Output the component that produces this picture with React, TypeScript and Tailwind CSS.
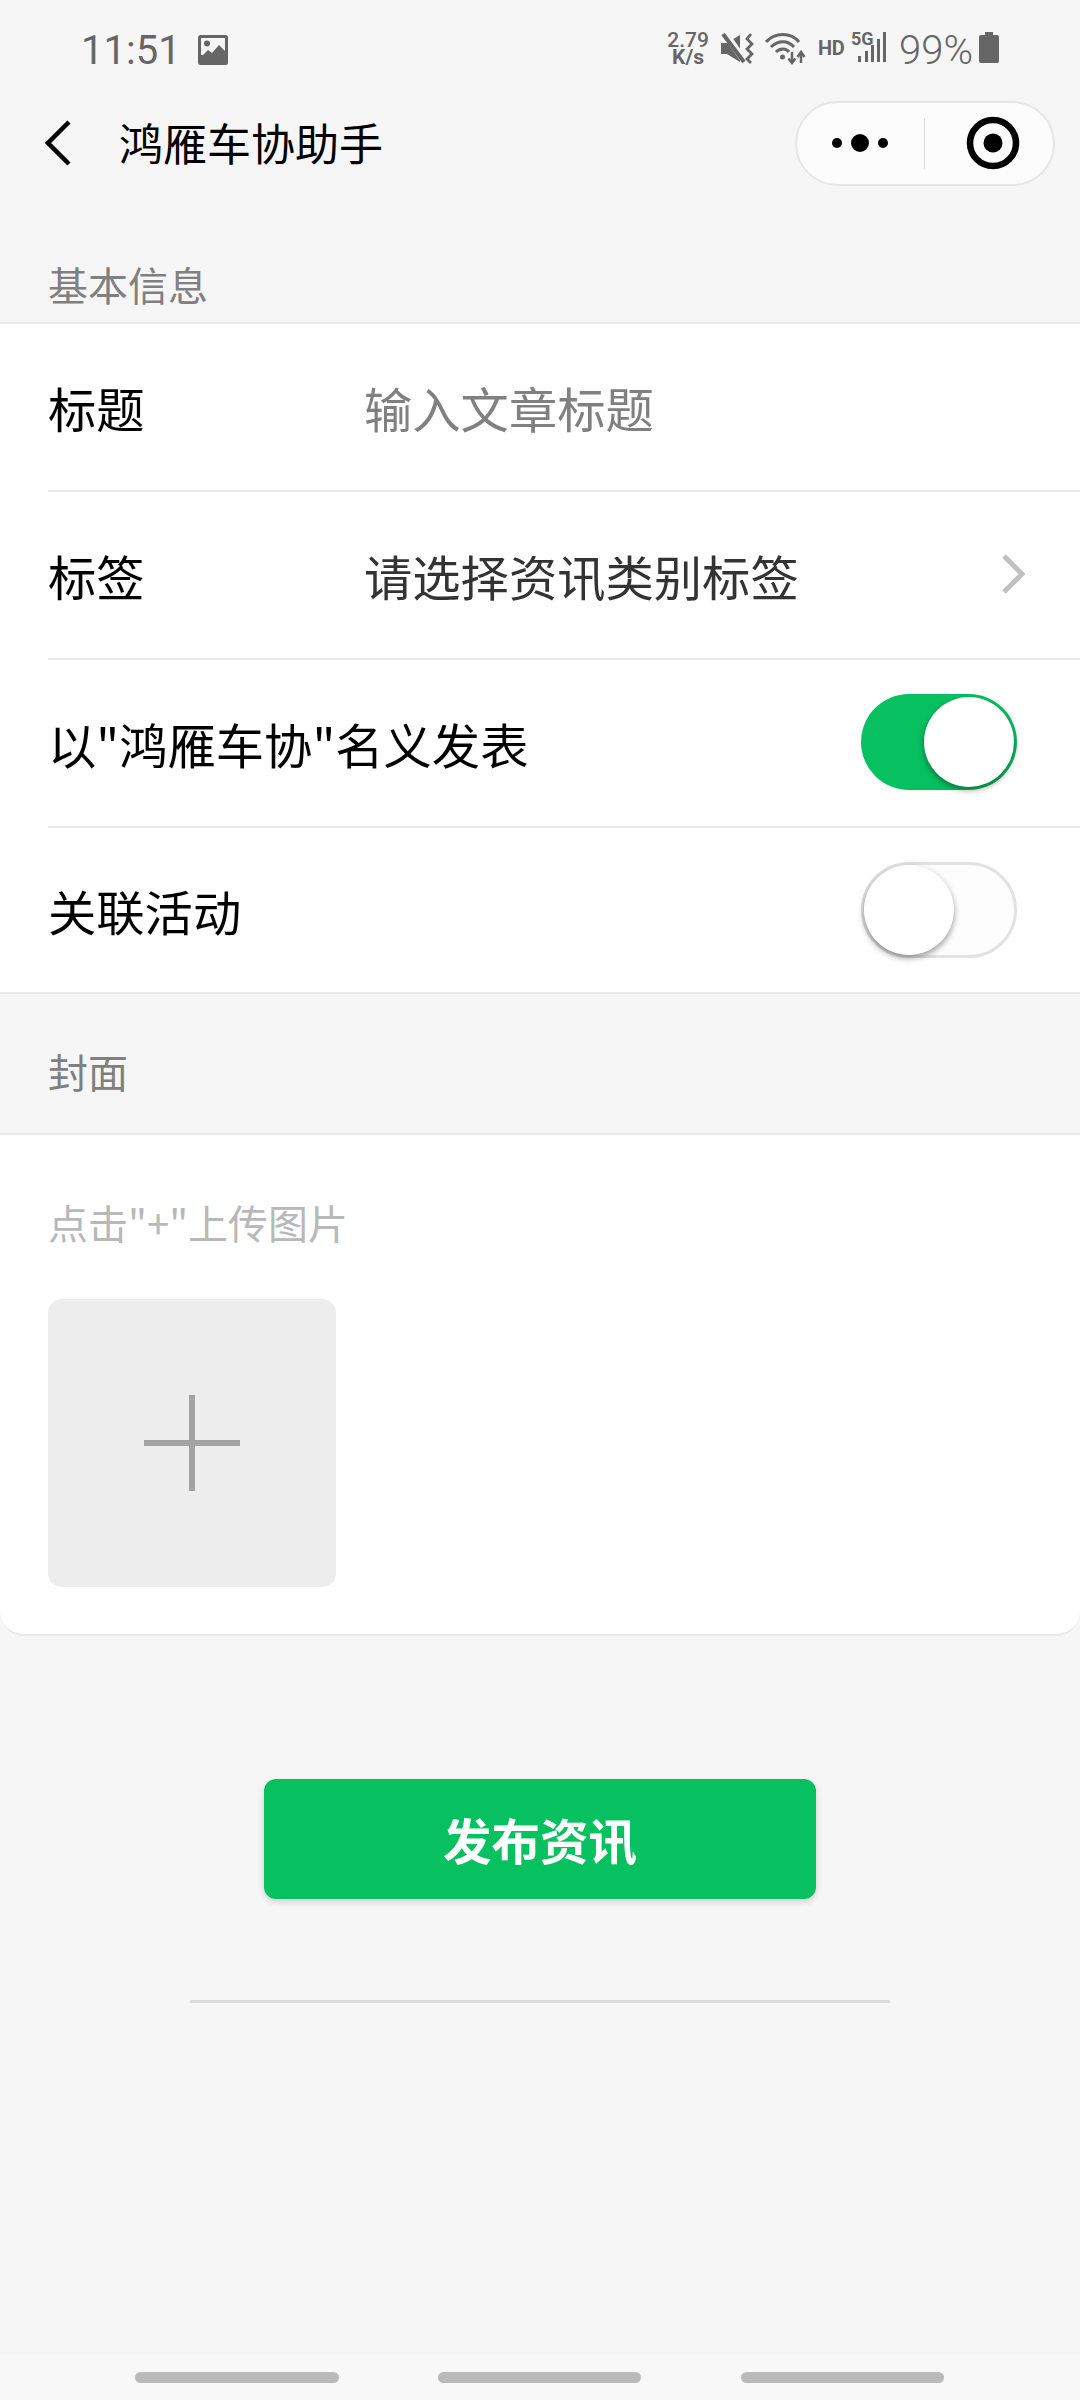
import React from "react";

const cjk = { fontFamily: '"Noto Sans CJK SC", sans-serif' } as const;

function Toggle({ on }: { on: boolean }) {
  return (
    <div className={on ? "relative mb-[2px] ml-auto mr-[63px] h-[96px] w-[156px] rounded-full bg-[#07c160]" : "relative ml-auto mr-[63px] h-[96px] w-[156px] rounded-full border-[3px] border-[#e2e2e2] bg-[#fdfdfd]"}>
      {on ? (
        <div className="absolute right-[3px] top-[3px] h-[90px] w-[90px] rounded-full bg-white shadow-[0_3px_6px_rgba(0,0,0,0.4)]" />
      ) : (
        <div className="absolute left-0 top-0 h-[90px] w-[90px] rounded-full bg-white shadow-[0_3px_6px_rgba(0,0,0,0.4)]" />
      )}
    </div>
  );
}

function Row({ children, border = true }: { children: React.ReactNode; border?: boolean }) {
  return (
    <div className={border ? "ml-[48px] flex h-[168px] items-center border-b-2 border-[#e8e8e8] text-[48.3px] text-black" : "ml-[48px] flex h-[164px] items-center text-[48.3px] text-black"}>
      {children}
    </div>
  );
}

function StatusBar() {
  return (
    <div className="flex h-[98px] items-start pt-[29px] text-[#666666]" style={{ fontFamily: "Roboto, sans-serif" }}>
      <span className="-mt-[1px] ml-[81px] text-[40px] leading-[46px]">11:51</span>
      <svg className="ml-[16px] mt-[6px]" width="32" height="30" viewBox="0 0 32 30">
        <rect x="1" y="0" width="30" height="30" rx="2.5" fill="#666" />
        <rect x="4" y="3" width="24" height="17" fill="#f6f6f6" />
        <circle cx="10" cy="8.5" r="3" fill="#666" />
        <path d="M3 23 L11 15 L15 18 L22 10 L29 17 V27 H3 Z" fill="#666" />
      </svg>
      <div className="ml-auto mr-[13px] mt-[3px] flex w-[40px] flex-col items-center text-[21px] font-medium leading-[17px]">
        <span>2.79</span>
        <span className="font-bold">K/s</span>
      </div>
      <svg className="mr-[11px] mt-[4px]" width="33" height="31" viewBox="0 0 33 31">
        <path d="M0 10 H6 L19 2 V29 L6 21 H0 Z" fill="#666" />
        <path d="M3 -1 L25 30" stroke="#f6f6f6" strokeWidth="7" />
        <path d="M2 1 L23 29" stroke="#666" strokeWidth="4" />
        <path d="M30 1 L26 6 L31 11 L26 16 L31 21 L26 26 L30 30" fill="none" stroke="#666" strokeWidth="2.8" />
      </svg>
      <svg className="mr-[12px] mt-[3px]" width="41" height="33" viewBox="0 0 41 33">
        <path d="M1 10 C10 0 26 0 34 10" fill="none" stroke="#666" strokeWidth="3" />
        <path d="M6 15 C13 8 23 8 29 15" fill="none" stroke="#666" strokeWidth="3" />
        <path d="M11 20 C15 16 21 16 24 20" fill="none" stroke="#666" strokeWidth="3" />
        <circle cx="17.5" cy="25" r="2.5" fill="#666" />
        <path d="M27 20 V30 M23.5 26.5 L27 31 L30.5 26.5" fill="none" stroke="#666" strokeWidth="2.5" />
        <path d="M36 31 V21 M32.5 25 L36 20 L39.5 25" fill="none" stroke="#666" strokeWidth="2.5" />
      </svg>
      <span className="mt-[7px] w-[26px] text-[20px] font-bold leading-[24px] tracking-[-0.5px]">HD</span>
      <div className="relative ml-[7px] h-[34px] w-[36px]">
        <span className="absolute left-0 top-[1px] text-[18px] font-bold leading-[18px]">5G</span>
        <svg className="absolute left-0 top-0" width="36" height="34" viewBox="0 0 36 34">
          <rect x="7" y="27" width="3" height="6" fill="#666" />
          <rect x="14" y="22" width="3" height="11" fill="#666" />
          <rect x="20" y="16" width="3" height="17" fill="#666" />
          <rect x="26" y="10" width="3" height="23" fill="#666" />
          <rect x="32" y="3" width="3" height="30" fill="#666" />
        </svg>
      </div>
      <span className="ml-[12px] mt-[-1px] text-[40px] font-light leading-[46px]">99%</span>
      <svg className="ml-[6px] mr-[81px] mt-[3px]" width="20" height="31" viewBox="0 0 20 31">
        <path d="M6 0 H14 V3 H18 Q20 3 20 5 V29 Q20 31 18 31 H2 Q0 31 0 29 V5 Q0 3 2 3 H6 Z" fill="#666" />
      </svg>
    </div>
  );
}

function NavBar() {
  return (
    <div className="flex h-[90px] items-center">
      <svg className="ml-[44px]" width="28" height="48" viewBox="0 0 28 48">
        <path d="M25 3 L4 24 L25 45" fill="none" stroke="#000" strokeWidth="4.5" />
      </svg>
      <span className="mb-[2px] ml-[47px] text-[44px] leading-[60px] text-black">鸿雁车协助手</span>
      <div className="ml-auto mr-[25px] flex h-[85px] w-[260px] items-center rounded-full border-2 border-[#e6e6e6] bg-[#fcfcfc]">
        <svg className="ml-[34px]" width="60" height="20" viewBox="0 0 60 20">
          <circle cx="6" cy="10" r="5" fill="#000" />
          <circle cx="29" cy="10" r="9" fill="#000" />
          <circle cx="52" cy="10" r="5" fill="#000" />
        </svg>
        <div className="ml-[33px] h-[51px] w-[1px] bg-[#dedede]" />
        <svg className="ml-[41px]" width="54" height="54" viewBox="0 0 54 54">
          <circle cx="27" cy="27" r="23" fill="none" stroke="#000" strokeWidth="6.5" />
          <circle cx="27" cy="27" r="9.5" fill="#000" />
        </svg>
      </div>
    </div>
  );
}

export default function App() {
  return (
    <div className="flex h-[2400px] w-[1080px] flex-col overflow-hidden bg-[#f6f6f6]" style={cjk}>
      <StatusBar />
      <NavBar />

      <div className="flex h-[134px] items-end pb-[10px] pl-[48px] text-[40px] leading-[56px] text-[#808080]">基本信息</div>

      <div className="border-y-2 border-[#e8e8e8] bg-white">
        <Row>
          <span className="w-[316px]">标题</span>
          <span className="text-[#808080]">输入文章标题</span>
        </Row>
        <Row>
          <span className="w-[316px]">标签</span>
          <span className="text-[#333333]">请选择资讯类别标签</span>
          <svg className="mb-[2px] ml-auto mr-[55px]" width="24" height="42" viewBox="0 0 24 42">
            <path d="M3 3 L21 21 L3 39" fill="none" stroke="#c0c0c0" strokeWidth="5" />
          </svg>
        </Row>
        <Row>
          <span>以"鸿雁车协"名义发表</span>
          <Toggle on />
        </Row>
        <Row border={false}>
          <span>关联活动</span>
          <Toggle on={false} />
        </Row>
      </div>

      <div className="flex h-[139px] items-center pl-[48px] pt-[14px] text-[40px] leading-[56px] text-[#808080]">封面</div>

      <div className="h-[503px] rounded-b-[24px] border-y-2 border-[#e8e8e8] bg-white pl-[48px]">
        <div className="pt-[59px] text-[40px] leading-[56px] text-[#b8b8b8]">点击"+"上传图片</div>
        <div className="mt-[49px] flex h-[288px] w-[288px] items-center justify-center rounded-[14px] bg-[#ededed]">
          <svg width="96" height="96" viewBox="0 0 96 96">
            <path d="M0 48 H96 M48 0 V96" stroke="#a3a3a3" strokeWidth="6" />
          </svg>
        </div>
      </div>

      <button className="mx-auto mt-[143px] h-[120px] w-[552px] rounded-[12px] bg-[#07c160] text-[48.5px] font-bold text-white shadow-[0_3px_6px_rgba(0,0,0,0.15)]">
        发布资讯
      </button>

      <div className="mx-auto mt-[101px] h-[3px] w-[700px] bg-[#dddddd]" />

      <div className="mt-auto flex h-[46px] bg-[#f8f8f8] pl-[135px] pt-[18px]">
        <div className="h-[11px] w-[204px] rounded-full bg-[#bababa]" />
        <div className="ml-[99px] h-[11px] w-[203px] rounded-full bg-[#bababa]" />
        <div className="ml-[100px] h-[11px] w-[203px] rounded-full bg-[#bababa]" />
      </div>
    </div>
  );
}
